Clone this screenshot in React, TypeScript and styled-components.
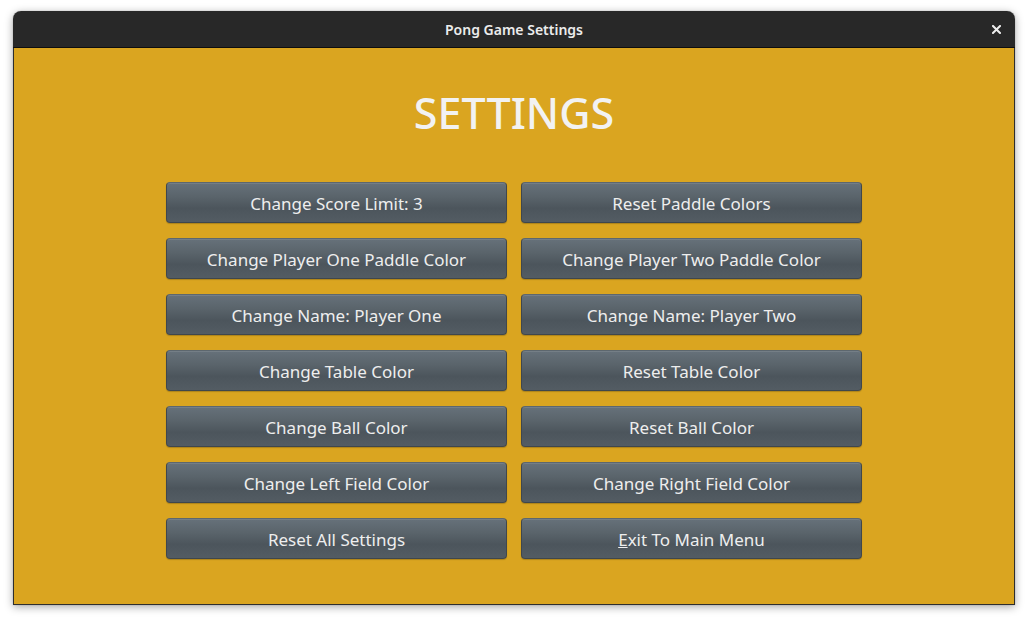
import React from "react";
import styled, { createGlobalStyle } from "styled-components";

const Global = createGlobalStyle`
  html, body { margin: 0; padding: 0; background: #ffffff; }
  body { font-family: "Noto Sans", "DejaVu Sans", sans-serif; }
  * { box-sizing: border-box; }
`;

const Page = styled.div`
  width: 1028px;
  height: 621px;
  padding: 11px 0 0 13px;
`;

const Window = styled.div`
  width: 1002px;
  height: 594px;
  border-radius: 8px 8px 0 0;
  box-shadow: 0 2px 8px rgba(0, 0, 0, 0.35), 0 0 1px rgba(0, 0, 0, 0.4);
  display: flex;
  flex-direction: column;
  overflow: hidden;
`;

const TitleBar = styled.div`
  height: 37px;
  flex: none;
  background: #282828;
  border-bottom: 1px solid #0e0e0e;
  display: flex;
  align-items: center;
  justify-content: center;
  position: relative;
  color: #ececec;
  font-size: 14px;
  font-weight: 600;
`;

const Close = styled.button`
  position: absolute;
  right: 12px;
  top: 11px;
  width: 14px;
  height: 14px;
  padding: 0;
  border: none;
  background: transparent;
  display: flex;
  align-items: center;
  justify-content: center;
`;

const Content = styled.div`
  flex: 1;
  background: #daa520;
  border: 1px solid #2e2e2e;
  border-top: none;
  display: flex;
  flex-direction: column;
  align-items: center;
  padding-top: 37px;
`;

const Heading = styled.h1`
  margin: 0 0 41px 0;
  font-size: 43px;
  line-height: 56px;
  font-weight: 500;
  color: #f2f2f2;
`;

const Grid = styled.div`
  display: grid;
  grid-template-columns: 341px 341px;
  column-gap: 14px;
  row-gap: 15px;
`;

const Btn = styled.button`
  height: 41px;
  border-radius: 4px;
  border: 1px solid #40474c;
  border-top-color: #5d676e;
  background: linear-gradient(
    to bottom,
    #66717a 0%,
    #5a646b 35%,
    #4c555c 65%,
    #535c63 100%
  );
  box-shadow: inset 0 1px 0 rgba(255, 255, 255, 0.1), 0 1px 1px rgba(0, 0, 0, 0.2);
  color: #eeeeee;
  font-family: "Noto Sans", "DejaVu Sans", sans-serif;
  font-size: 17px;
  padding: 2px 0 0 0;
  cursor: pointer;
`;

const left = [
  "Change Score Limit: 3",
  "Change Player One Paddle Color",
  "Change Name: Player One",
  "Change Table Color",
  "Change Ball Color",
  "Change Left Field Color",
  "Reset All Settings",
];
const right = [
  "Reset Paddle Colors",
  "Change Player Two Paddle Color",
  "Change Name: Player Two",
  "Reset Table Color",
  "Reset Ball Color",
  "Change Right Field Color",
];

export default function App() {
  const items: React.ReactNode[] = [];
  left.forEach((l, i) => {
    items.push(<Btn key={"l" + i}>{l}</Btn>);
    if (i < right.length) items.push(<Btn key={"r" + i}>{right[i]}</Btn>);
  });
  items.push(
    <Btn key="exit">
      <u>E</u>xit To Main Menu
    </Btn>
  );
  return (
    <>
      <Global />
      <Page>
        <Window>
          <TitleBar>
            Pong Game Settings
            <Close aria-label="close">
              <svg width="9" height="9" viewBox="0 0 9 9">
                <path d="M1 1 L8 8 M8 1 L1 8" stroke="#eeeeee" strokeWidth="2" strokeLinecap="square" />
              </svg>
            </Close>
          </TitleBar>
          <Content>
            <Heading>SETTINGS</Heading>
            <Grid>{items}</Grid>
          </Content>
        </Window>
      </Page>
    </>
  );
}
